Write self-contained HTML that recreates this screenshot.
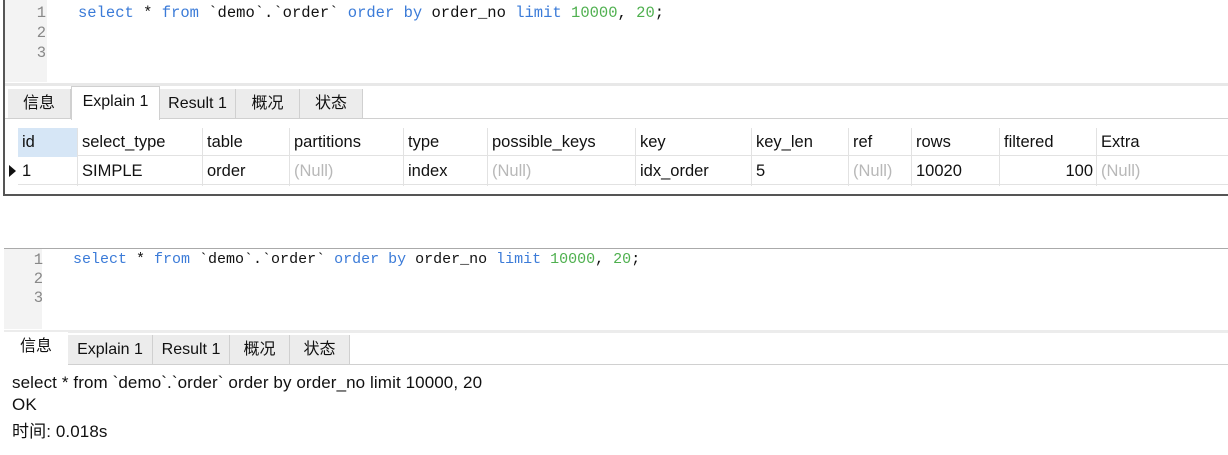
<!DOCTYPE html>
<html><head><meta charset="utf-8"><style>
body{margin:0;width:1228px;height:455px;background:#fff;position:relative;overflow:hidden;font-family:"Liberation Sans","Noto Sans CJK SC",sans-serif;color:#111}
div,span{position:absolute;box-sizing:border-box}
.mono{font-family:"Liberation Mono","DejaVu Sans Mono",monospace;font-size:15.5px;white-space:pre}
.kw{color:#3b7bd8}.num{color:#4fb04f}
.ln{color:#888;text-align:right;width:20px}
.tab{font-size:16px;top:0;height:100%;line-height:30px;text-align:center;border-right:1px solid #d0d0d0;background:#ececec}
.cell{font-size:16.5px;line-height:29px;padding-left:4px;border-right:1px solid #e2e2e2;white-space:nowrap}
.null{color:#b8b8b8}
.t{font-size:17px;white-space:nowrap;letter-spacing:0.1px}
</style></head><body>
<div style="left:3px;top:0;width:2px;height:196px;background:#555"></div>
<div style="left:5px;top:0;width:42px;height:82px;background:#f3f3f3"></div>
<div class="mono ln" style="left:26px;top:4px">1</div>
<div class="mono ln" style="left:26px;top:24px">2</div>
<div class="mono ln" style="left:26px;top:44px">3</div>
<div class="mono" style="left:78px;top:4px"><span style="position:static" class="kw">select</span> * <span style="position:static" class="kw">from</span> `demo`.`order` <span style="position:static" class="kw">order by</span> order_no <span style="position:static" class="kw">limit</span> <span style="position:static" class="num">10000</span>, <span style="position:static" class="num">20</span>;</div>
<div style="left:5px;top:83px;width:1223px;height:3px;background:#e8e8e8"></div>
<div style="left:5px;top:89px;width:1223px;height:30px;border-bottom:1px solid #d0d0d0">
 <div class="tab" style="left:3px;width:63px">信息</div>
 <div class="tab" style="left:66px;width:89px;background:#fff;top:-3px;height:34px;border:1px solid #d0d0d0;border-bottom:none">Explain 1</div>
 <div class="tab" style="left:155px;width:76px">Result 1</div>
 <div class="tab" style="left:231px;width:64px">概况</div>
 <div class="tab" style="left:295px;width:63px">状态</div>
</div>
<div style="left:18px;top:127px;width:1210px;height:58px">
 <div style="left:0;top:0;width:1210px;height:29px;border-bottom:1px solid #e2e2e2"></div>
 <div style="left:0;top:29px;width:1210px;height:29px;border-bottom:1px solid #e2e2e2"></div>
</div>
<div class="cell" style="left:18px;top:128px;width:60px;height:29px;background:#d6e6f6">id</div>
<div class="cell" style="left:78px;top:128px;width:125px">select_type</div>
<div class="cell" style="left:203px;top:128px;width:87px">table</div>
<div class="cell" style="left:290px;top:128px;width:114px">partitions</div>
<div class="cell" style="left:404px;top:128px;width:84px">type</div>
<div class="cell" style="left:488px;top:128px;width:148px">possible_keys</div>
<div class="cell" style="left:636px;top:128px;width:116px">key</div>
<div class="cell" style="left:752px;top:128px;width:97px">key_len</div>
<div class="cell" style="left:849px;top:128px;width:63px">ref</div>
<div class="cell" style="left:912px;top:128px;width:88px">rows</div>
<div class="cell" style="left:1000px;top:128px;width:97px">filtered</div>
<div class="cell" style="left:1097px;top:128px;width:131px;border:none">Extra</div>
<div style="left:9px;top:165px;width:0;height:0;border-left:7px solid #111;border-top:6px solid transparent;border-bottom:6px solid transparent"></div>
<div class="cell" style="left:18px;top:157px;width:60px">1</div>
<div class="cell" style="left:78px;top:157px;width:125px">SIMPLE</div>
<div class="cell" style="left:203px;top:157px;width:87px">order</div>
<div class="cell null" style="left:290px;top:157px;width:114px">(Null)</div>
<div class="cell" style="left:404px;top:157px;width:84px">index</div>
<div class="cell null" style="left:488px;top:157px;width:148px">(Null)</div>
<div class="cell" style="left:636px;top:157px;width:116px">idx_order</div>
<div class="cell" style="left:752px;top:157px;width:97px">5</div>
<div class="cell null" style="left:849px;top:157px;width:63px">(Null)</div>
<div class="cell" style="left:912px;top:157px;width:88px">10020</div>
<div class="cell" style="left:1000px;top:157px;width:97px;text-align:right;padding-right:3px">100</div>
<div class="cell null" style="left:1097px;top:157px;width:131px;border:none">(Null)</div>
<div style="left:3px;top:194px;width:1225px;height:2px;background:#555"></div>

<div style="left:4px;top:248px;width:1224px;height:1px;background:#aaa"></div>
<div style="left:4px;top:249px;width:38px;height:80px;background:#f3f3f3"></div>
<div class="mono ln" style="left:23px;top:251px">1</div>
<div class="mono ln" style="left:23px;top:270px">2</div>
<div class="mono ln" style="left:23px;top:289px">3</div>
<div class="mono" style="left:73px;top:251px;font-size:15px"><span style="position:static" class="kw">select</span> * <span style="position:static" class="kw">from</span> `demo`.`order` <span style="position:static" class="kw">order by</span> order_no <span style="position:static" class="kw">limit</span> <span style="position:static" class="num">10000</span>, <span style="position:static" class="num">20</span>;</div>
<div style="left:4px;top:330px;width:1224px;height:3px;background:#ececec"></div>
<div style="left:4px;top:335px;width:1224px;height:30px;border-bottom:1px solid #d0d0d0">
 <div class="tab" style="left:0;width:64px;background:#fff;top:-3px;height:34px;border:none">信息</div>
 <div class="tab" style="left:64px;width:85px">Explain 1</div>
 <div class="tab" style="left:149px;width:77px">Result 1</div>
 <div class="tab" style="left:226px;width:60px">概况</div>
 <div class="tab" style="left:286px;width:60px">状态</div>
</div>
<div class="t" style="left:12px;top:373px">select * from `demo`.`order` order by order_no limit 10000, 20</div>
<div class="t" style="left:12px;top:395px">OK</div>
<div class="t" style="left:12px;top:417px">时间: 0.018s</div>
</body></html>
